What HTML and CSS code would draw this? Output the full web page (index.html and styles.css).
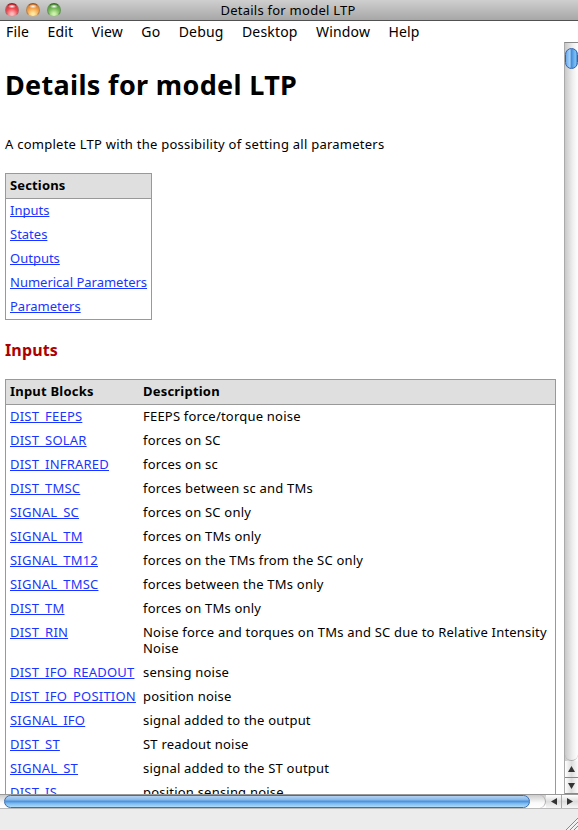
FILE: index.html
```
<!DOCTYPE html>
<html lang="en">
<head>
<meta charset="utf-8">
<title>Details for model LTP</title>
<link rel="stylesheet" href="styles.css">
</head>
<body>
<div class="window">
  <header class="titlebar">
    <div class="lights"><i class="light red"></i><i class="light amber"></i><i class="light green"></i></div>
    <div class="title">Details for model LTP</div>
  </header>
  <nav class="menu"><span>File</span><span>Edit</span><span>View</span><span>Go</span><span>Debug</span><span>Desktop</span><span>Window</span><span>Help</span></nav>
  <div class="viewport">
    <main class="page">
      <h1>Details for model LTP</h1>
      <p class="intro">A complete LTP with the possibility of setting all parameters</p>
      <div class="box sections">
        <div class="head">Sections</div>
        <ul>
          <li><a>Inputs</a></li>
          <li><a>States</a></li>
          <li><a>Outputs</a></li>
          <li><a>Numerical Parameters</a></li>
          <li><a>Parameters</a></li>
        </ul>
      </div>
      <h2>Inputs</h2>
      <div class="box blocks">
        <div class="head row"><span>Input Blocks</span><span>Description</span></div>
        <div class="row"><a>DIST_FEEPS</a><span>FEEPS force/torque noise</span></div>
        <div class="row"><a>DIST_SOLAR</a><span>forces on SC</span></div>
        <div class="row"><a>DIST_INFRARED</a><span>forces on sc</span></div>
        <div class="row"><a>DIST_TMSC</a><span>forces between sc and TMs</span></div>
        <div class="row"><a>SIGNAL_SC</a><span>forces on SC only</span></div>
        <div class="row"><a>SIGNAL_TM</a><span>forces on TMs only</span></div>
        <div class="row"><a>SIGNAL_TM12</a><span>forces on the TMs from the SC only</span></div>
        <div class="row"><a>SIGNAL_TMSC</a><span>forces between the TMs only</span></div>
        <div class="row"><a>DIST_TM</a><span>forces on TMs only</span></div>
        <div class="row"><a>DIST_RIN</a><span>Noise force and torques on TMs and SC due to Relative Intensity<br>Noise</span></div>
        <div class="row"><a>DIST_IFO_READOUT</a><span>sensing noise</span></div>
        <div class="row"><a>DIST_IFO_POSITION</a><span>position noise</span></div>
        <div class="row"><a>SIGNAL_IFO</a><span>signal added to the output</span></div>
        <div class="row"><a>DIST_ST</a><span>ST readout noise</span></div>
        <div class="row"><a>SIGNAL_ST</a><span>signal added to the ST output</span></div>
        <div class="row"><a>DIST_IS</a><span>position sensing noise</span></div>
      </div>
    </main>
    <aside class="vbar">
      <div class="vtrack"><div class="vthumb"></div></div>
      <div class="vbtn"><svg width="7" height="6" viewBox="0 0 7 6"><path d="M3.5 0 7 6H0z"/></svg></div>
      <div class="vbtn last"><svg width="7" height="6" viewBox="0 0 7 6"><path d="M3.5 6 7 0H0z"/></svg></div>
    </aside>
  </div>
  <div class="hbar">
    <div class="htrack"><div class="hthumb"></div></div>
    <div class="hbtn"><svg width="6" height="7" viewBox="0 0 6 7"><path d="M0 3.5 6 0v7z"/></svg></div>
    <div class="hbtn last"><svg width="6" height="7" viewBox="0 0 6 7"><path d="M6 3.5 0 0v7z"/></svg></div>
  </div>
  <footer class="foot"><svg width="12" height="12" viewBox="0 0 12 12" fill="none"><path d="M0 12 12 0M4 12 12 4M8 12 12 8" stroke="#888"/><path d="M1.2 12.2 12.2 1.2M5.2 12.2 12.2 5.2M9.2 12.2 12.2 9.2" stroke="#fff" stroke-width=".7"/></svg></footer>
</div>
</body>
</html>
```
FILE: styles.css
```
* { box-sizing: border-box; }
body { margin: 0; font-family: "Noto Sans", "Open Sans", sans-serif; font-size: 13px; color: #000; background: #fff; }
.window { width: 578px; height: 830px; display: flex; flex-direction: column; overflow: hidden; }
.titlebar { height: 21px; flex: none; display: grid; grid-template-columns: 70px 1fr 72px; align-items: center; background: linear-gradient(#cfcfcf, #a7a7a7); border-bottom: 1px solid #515151; }
.lights { display: flex; gap: 7px; padding-left: 5px; }
.light { width: 14px; height: 14px; border-radius: 50%; border: 1px solid; }
.red { border-color: #8d2528 #b06568 #bda0a0; background: radial-gradient(ellipse 4px 2px at 50% 20%, #fff, transparent), radial-gradient(circle at 50% 85%, #ffb9bb 10%, #ed4b51 50%, #b91f27); }
.amber { border-color: #93542a #b58350 #c0b09a; background: radial-gradient(ellipse 4px 2px at 50% 20%, #fff, transparent), radial-gradient(circle at 50% 85%, #ffe79f 10%, #f3a54e 50%, #c2631f); }
.green { border-color: #3b6a2d #659457 #a3b59b; background: radial-gradient(ellipse 4px 2px at 50% 20%, #fff, transparent), radial-gradient(circle at 50% 85%, #cdf2ac 10%, #78b95b 50%, #397d28); }
.title { text-align: center; line-height: 20px; letter-spacing: .25px; }
.menu { height: 21px; flex: none; display: flex; gap: 18.4px; padding-left: 6px; font-size: 14px; line-height: 21px; letter-spacing: .17px; }
.viewport { height: 753px; flex: none; display: flex; overflow: hidden; border-bottom: 1px solid #999; }
.page { width: 564px; flex: none; padding: 0 8px 0 5px; }
h1 { margin: 25px 0 0; font-size: 27px; line-height: 36px; font-weight: 700; letter-spacing: .33px; white-space: nowrap; }
.intro { margin: 33px 0 20px; line-height: 17px; letter-spacing: .25px; white-space: nowrap; }
.box { border: 1px solid #999; line-height: 16px; }
.head { background: #dfdfdf; border-bottom: 1px solid #999; font-weight: 700; height: 25px; padding: 3px 4px 4px; letter-spacing: .15px; }
.sections { width: 147px; height: 147px; }
.sections ul { list-style: none; margin: 0; padding: 0; }
.sections li { height: 24px; padding: 3px 4px 5px; white-space: nowrap; }
a { color: #1a35ff; text-decoration: underline; text-underline-offset: 1px; text-decoration-thickness: 1px; text-decoration-skip-ink: none; justify-self: start; align-self: start; }
h2 { margin: 20px 0 18px; font-size: 16px; line-height: 21px; letter-spacing: .15px; color: #ad0000; }
.row { display: grid; grid-template-columns: 133px 1fr; padding: 3px 4px 5px; letter-spacing: .21px; white-space: nowrap; }
.vbar { width: 14px; flex: none; display: flex; flex-direction: column; border-left: 1px solid #aaa; border-top: 1px solid #888; background: linear-gradient(90deg, #c9c9c9, #efefef 60%, #fff); }
.vtrack { flex: 1; padding-top: 5px; border-radius: 0 0 8px 8px; border-bottom: 1px solid #aaa; }
.vthumb { height: 21px; width: 13px; border-radius: 7px; border: 1px solid #3163ae; background: linear-gradient(90deg, #6eaaea, #a5d2f8 35%, #458fdd 50%, #7fc0f4 85%, #488cd0); }
.vbtn { height: 17px; flex: none; display: flex; align-items: center; justify-content: center; border-bottom: 1px solid #888; background: linear-gradient(90deg, #fff, #ddd 50%, #fafafa); }
.vbtn.last { height: 16px; }
.vbtn svg, .hbtn svg { fill: #333; }
.hbar { height: 14px; flex: none; display: flex; border-bottom: 1px solid #bbb; background: linear-gradient(#ccc, #fafafa 60%, #fff); }
.htrack { width: 546px; padding-left: 4px; border-radius: 0 8px 8px 0; border-right: 1px solid #aaa; }
.hthumb { width: 526px; height: 13px; border-radius: 7px; border: 1px solid #3c6dac; background: linear-gradient(#b4d3f1, #86b9e9 35%, #4a90dc 48%, #7fbdf1 70%, #addcf9); }
.hbtn { width: 16px; display: flex; align-items: center; justify-content: center; background: linear-gradient(#fff, #ddd 50%, #f7f7f7); border-right: 1px solid #aaa; }
.hbtn.last { border: 0; }
.foot { flex: 1; display: flex; justify-content: flex-end; align-items: flex-end; background: #ececec; }
```
